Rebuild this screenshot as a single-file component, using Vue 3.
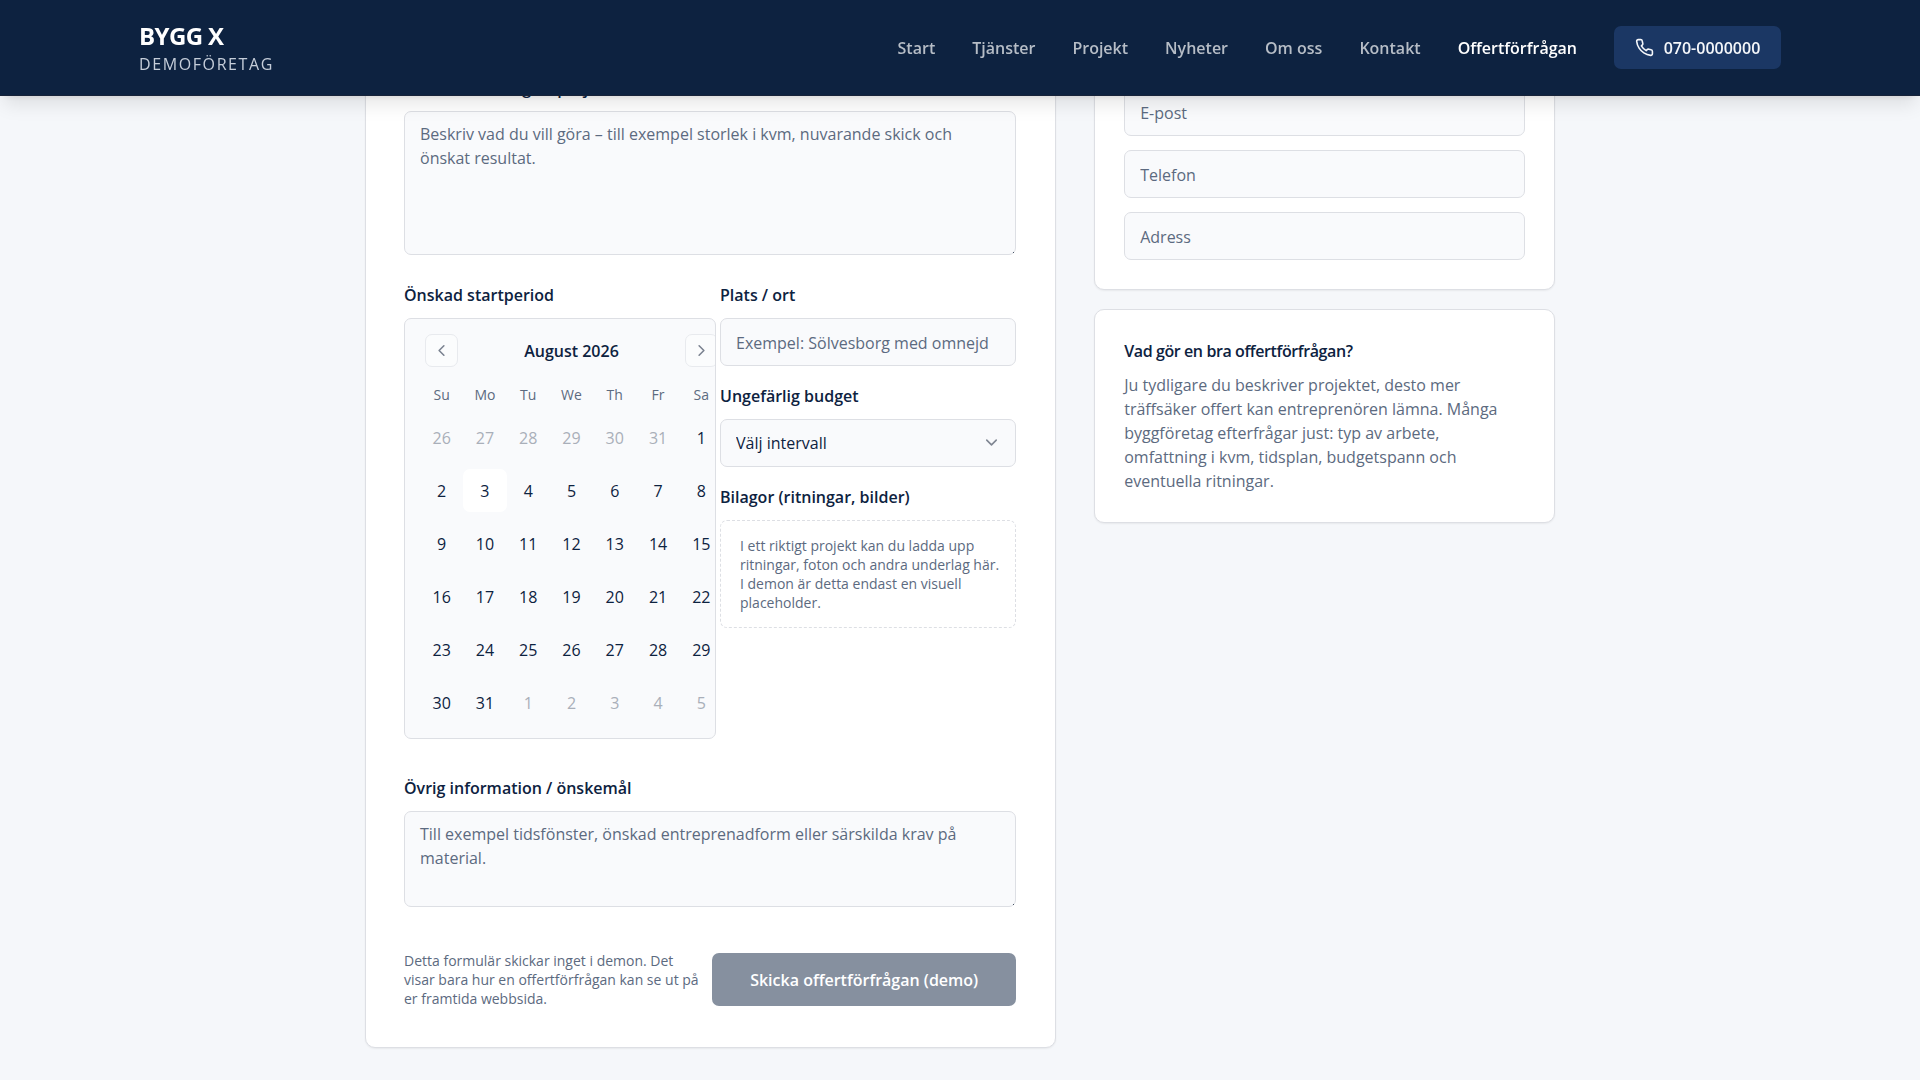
<script setup>
import { ref } from 'vue'

const links = ['Start', 'Tjänster', 'Projekt', 'Nyheter', 'Om oss', 'Kontakt', 'Offertförfrågan']
const active = 'Offertförfrågan'

const weekdays = ['Su', 'Mo', 'Tu', 'We', 'Th', 'Fr', 'Sa']
const firstDay = new Date(2026, 6, 26)
const weeks = Array.from({ length: 6 }, (_, w) =>
  Array.from({ length: 7 }, (_, d) => {
    const date = new Date(firstDay.getFullYear(), firstDay.getMonth(), firstDay.getDate() + w * 7 + d)
    const inMonth = date.getMonth() === 7
    return { key: w * 7 + d, day: date.getDate(), outside: !inMonth, today: inMonth && date.getDate() === 3 }
  })
)

const budget = ref('')
</script>

<template>
  <div class="page">
    <header class="site-header">
      <div class="bar">
        <a class="brand" href="#">
          <span class="brand-name">BYGG X</span>
          <span class="brand-sub">DEMOFÖRETAG</span>
        </a>
        <nav class="nav">
          <a v-for="l in links" :key="l" href="#" :class="{ active: l === active }">{{ l }}</a>
          <a class="phone" href="tel:0700000000">
            <svg viewBox="0 0 24 24" width="19" height="19" fill="none" stroke="currentColor" stroke-width="2" stroke-linecap="round" stroke-linejoin="round" aria-hidden="true">
              <path d="M22 16.92v3a2 2 0 0 1-2.18 2 19.79 19.79 0 0 1-8.63-3.07 19.5 19.5 0 0 1-6-6 19.79 19.79 0 0 1-3.07-8.67A2 2 0 0 1 4.11 2h3a2 2 0 0 1 2 1.72 12.84 12.84 0 0 0 .7 2.81 2 2 0 0 1-.45 2.11L8.09 9.91a16 16 0 0 0 6 6l1.27-1.27a2 2 0 0 1 2.11-.45 12.84 12.84 0 0 0 2.81.7A2 2 0 0 1 22 16.92z" />
            </svg>
            <span>070-0000000</span>
          </a>
        </nav>
      </div>
    </header>

    <main class="content">
      <form class="card form-card" @submit.prevent>
        <div class="field">
          <label for="desc">Kort beskrivning av projektet</label>
          <textarea id="desc" class="control tall" placeholder="Beskriv vad du vill göra – till exempel storlek i kvm, nuvarande skick och önskat resultat."></textarea>
        </div>

        <div class="split">
          <div class="field">
            <span class="label">Önskad startperiod</span>
            <div class="calendar">
              <div class="cal-head">
                <button type="button" aria-label="Föregående månad">
                  <svg viewBox="0 0 24 24" width="19" height="19" fill="none" stroke="currentColor" stroke-width="2" stroke-linecap="round" stroke-linejoin="round"><path d="m15 18-6-6 6-6" /></svg>
                </button>
                <span class="cal-title">August 2026</span>
                <button type="button" aria-label="Nästa månad">
                  <svg viewBox="0 0 24 24" width="19" height="19" fill="none" stroke="currentColor" stroke-width="2" stroke-linecap="round" stroke-linejoin="round"><path d="m9 18 6-6-6-6" /></svg>
                </button>
              </div>
              <table>
                <thead>
                  <tr><th v-for="d in weekdays" :key="d" scope="col">{{ d }}</th></tr>
                </thead>
                <tbody>
                  <tr v-for="(week, i) in weeks" :key="i">
                    <td v-for="c in week" :key="c.key">
                      <button type="button" class="day" :class="{ outside: c.outside, today: c.today }">{{ c.day }}</button>
                    </td>
                  </tr>
                </tbody>
              </table>
            </div>
          </div>

          <div class="stack">
            <div class="field">
              <label for="place">Plats / ort</label>
              <input id="place" class="control" type="text" placeholder="Exempel: Sölvesborg med omnejd" />
            </div>
            <div class="field">
              <label for="budget">Ungefärlig budget</label>
              <div class="select">
                <select id="budget" v-model="budget" class="control">
                  <option value="">Välj intervall</option>
                </select>
                <svg viewBox="0 0 24 24" width="19" height="19" fill="none" stroke="currentColor" stroke-width="2" stroke-linecap="round" stroke-linejoin="round" aria-hidden="true"><path d="m6 9 6 6 6-6" /></svg>
              </div>
            </div>
            <div class="field">
              <span class="label">Bilagor (ritningar, bilder)</span>
              <p class="dropzone">I ett riktigt projekt kan du ladda upp ritningar, foton och andra underlag här.<br />I demon är detta endast en visuell placeholder.</p>
            </div>
          </div>
        </div>

        <div class="field extra">
          <label for="other">Övrig information / önskemål</label>
          <textarea id="other" class="control short" placeholder="Till exempel tidsfönster, önskad entreprenadform eller särskilda krav på material."></textarea>
        </div>

        <div class="submit-row">
          <p>Detta formulär skickar inget i demon. Det visar bara hur en offertförfrågan kan se ut på er framtida webbsida.</p>
          <button type="submit" class="submit" disabled>Skicka offertförfrågan (demo)</button>
        </div>
      </form>

      <aside class="side">
        <div class="card contact">
          <input class="control" type="email" placeholder="E-post" aria-label="E-post" />
          <input class="control" type="tel" placeholder="Telefon" aria-label="Telefon" />
          <input class="control" type="text" placeholder="Adress" aria-label="Adress" />
        </div>
        <div class="card tips">
          <h2>Vad gör en bra offertförfrågan?</h2>
          <p>Ju tydligare du beskriver projektet, desto mer träffsäker offert kan entreprenören lämna. Många byggföretag efterfrågar just: typ av arbete, omfattning i kvm, tidsplan, budgetspann och eventuella ritningar.</p>
        </div>
      </aside>
    </main>
  </div>
</template>

<style>
body {
  margin: 0;
  background: #f5f7fa;
}
</style>

<style scoped>
.page,
.page * {
  box-sizing: border-box;
}
.page {
  min-height: 100vh;
  font: 400 16px/24px "Open Sans", "Noto Sans", sans-serif;
  color: #0d2240;
}
button,
input,
select,
textarea {
  font: inherit;
  color: inherit;
}
p,
h2 {
  margin: 0;
}
svg {
  flex: none;
}

.site-header {
  position: fixed;
  inset: 0 0 auto;
  z-index: 10;
  height: 96px;
  background: #0d2240;
  border-bottom: 1px solid #172339;
  box-shadow: 0 12px 18px -4px rgba(0, 0, 0, 0.1), 0 5px 7px -5px rgba(0, 0, 0, 0.1);
}
.bar {
  display: flex;
  align-items: center;
  justify-content: space-between;
  max-width: 1680px;
  height: 100%;
  margin: 0 auto;
  padding: 0 19px;
}
.brand {
  display: flex;
  flex-direction: column;
  gap: 1px;
  padding-top: 2px;
  color: #fff;
  text-decoration: none;
}
.brand-name {
  font-size: 24px;
  line-height: 30px;
  font-weight: 700;
  letter-spacing: -0.025em;
}
.brand-sub {
  color: #c5cdd9;
  font-weight: 500;
  letter-spacing: 0.1em;
}
.nav {
  display: flex;
  align-items: center;
  gap: 37px;
}
.nav a {
  color: #b6bdc6;
  font-weight: 600;
  text-decoration: none;
}
.nav a.active {
  color: #fff;
}
.nav .phone {
  display: flex;
  align-items: center;
  justify-content: center;
  gap: 10px;
  min-width: 167px;
  height: 43px;
  padding: 0 19px;
  border-radius: 7px;
  background: #1b3764;
  color: #f5f7fa;
}

.content {
  display: grid;
  grid-template-columns: 3fr 2fr;
  align-items: start;
  gap: 38px;
  max-width: 1190px;
  margin: 0 auto;
  padding-bottom: 33px;
}
.card {
  background: #fff;
  border: 1px solid #dddfe4;
  border-radius: 10px;
  box-shadow: 0 1px 2px rgba(0, 0, 0, 0.06);
}
.form-card {
  padding: 75px 39px 39px 38px;
}
.field {
  display: flex;
  flex-direction: column;
  gap: 11px;
}
label,
.label {
  font-weight: 600;
}
.control {
  display: block;
  width: 100%;
  height: 48px;
  padding: 0 15px;
  border: 1px solid #dddfe4;
  border-radius: 7px;
  background: #f9fafc;
  outline: none;
}
input.control {
  padding-top: 2px;
}
.control::placeholder {
  color: #5c6a80;
  opacity: 1;
}
textarea.control {
  padding: 10px 15px;
  resize: vertical;
}
textarea::-webkit-resizer {
  background: linear-gradient(#4a5568, #4a5568) calc(100% - 1px) calc(100% - 1px) / 1px 1px no-repeat;
}
textarea.tall {
  height: 144px;
}
textarea.short {
  height: 96px;
}

.split {
  display: grid;
  grid-template-columns: 312px 1fr;
  align-items: start;
  gap: 4px;
  margin-top: 28px;
}
.stack {
  display: flex;
  flex-direction: column;
  gap: 18px;
}
.calendar {
  overflow: hidden;
  padding: 15px 0 9px 15px;
  border: 1px solid #dddfe4;
  border-radius: 7px;
  background: #f9fafc;
}
.cal-head {
  display: flex;
  align-items: center;
  justify-content: space-between;
  width: 303px;
  padding: 0 5px;
}
.cal-head button {
  display: flex;
  align-items: center;
  justify-content: center;
  width: 33px;
  height: 33px;
  padding: 0;
  border: 1px solid #e8eaee;
  border-radius: 7px;
  background: #fbfcfd;
  color: #7a8290;
}
.cal-title {
  font-weight: 600;
}
table {
  width: 303px;
  margin-top: 14px;
  table-layout: fixed;
  border-collapse: collapse;
}
th {
  height: 30px;
  padding: 0 0 2px;
  font-size: 14px;
  font-weight: 400;
  color: #5c6a80;
}
td {
  height: 53px;
  padding: 0;
}
.day {
  display: block;
  width: 100%;
  height: 43px;
  margin: 0;
  padding: 0;
  border: 0;
  border-radius: 7px;
  background: transparent;
}
.day.outside {
  color: #a9afb9;
}
.day.today {
  background: #fff;
}
.select {
  position: relative;
}
.select select {
  appearance: none;
}
.select svg {
  position: absolute;
  top: 14px;
  right: 15px;
  color: #7f8692;
  pointer-events: none;
}
.dropzone {
  padding: 15px 10px 15px 19px;
  border: 1px dashed #dddfe4;
  border-radius: 7px;
  font-size: 14px;
  line-height: 19px;
  color: #5c6a80;
}

.extra {
  margin-top: 37px;
}
.submit-row {
  display: flex;
  align-items: center;
  justify-content: space-between;
  gap: 8px;
  margin-top: 44px;
}
.submit-row p {
  flex: 1;
  font-size: 14px;
  line-height: 19px;
  color: #5c6a80;
}
.submit {
  flex: none;
  height: 53px;
  padding: 0 38px;
  border: 0;
  border-radius: 7px;
  background: #86909f;
  color: #fff;
  font-weight: 600;
}

.side {
  display: flex;
  flex-direction: column;
  gap: 19px;
}
.contact {
  display: flex;
  flex-direction: column;
  gap: 14px;
  padding: 87px 29px 29px;
}
.tips {
  padding: 29px;
}
.tips h2 {
  margin-bottom: 10px;
  font-size: 16px;
  line-height: 24px;
  font-weight: 600;
  letter-spacing: -0.025em;
}
.tips p {
  color: #5c6a80;
}
</style>
